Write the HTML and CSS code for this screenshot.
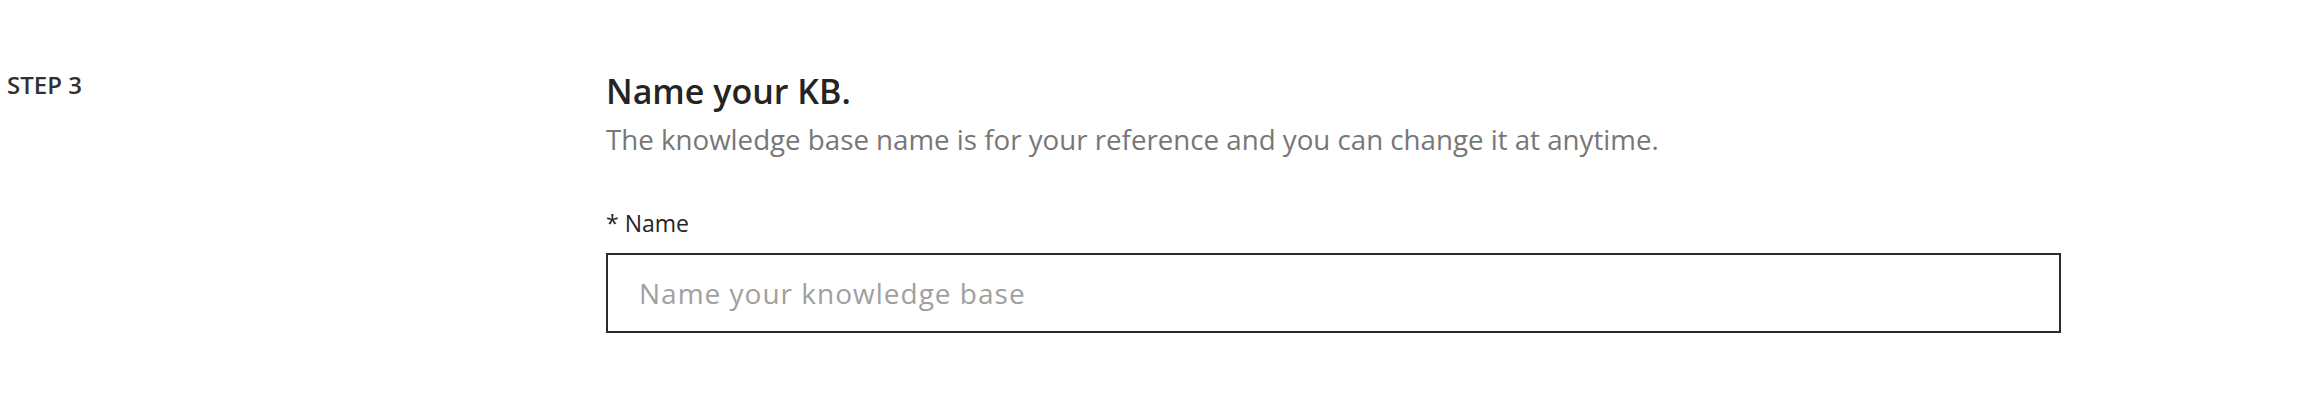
FILE: index.html
```html
<!DOCTYPE html>
<html lang="en">
<head>
<meta charset="utf-8">
<title>Name your KB</title>
<link rel="stylesheet" href="styles.css">
</head>
<body>
<section class="step">
  <div class="step-label">STEP 3</div>
  <div class="step-body">
    <h2 class="title">Name your KB.</h2>
    <p class="subtitle">The knowledge base name is for your reference and you can change it at anytime.</p>
    <label class="field-label" for="kbname">* Name</label>
    <input id="kbname" class="field-input" type="text" placeholder="Name your knowledge base">
  </div>
</section>
</body>
</html>
```

FILE: styles.css
```css
html, body {
  margin: 0;
  padding: 0;
  background: #ffffff;
}

body {
  font-family: "Open Sans", "Noto Sans", "Liberation Sans", sans-serif;
  color: #252423;
}

.step {
  display: flex;
  flex-direction: row;
  align-items: flex-start;
  padding-top: 69px;
  padding-left: 7px;
}

.step-label {
  width: 599px;
  flex: 0 0 599px;
  font-size: 24px;
  line-height: 32px;
  font-weight: 600;
  color: #323130;
}

.step-body {
  width: 1455px;
  display: flex;
  flex-direction: column;
}

.title {
  margin: 0;
  font-size: 34px;
  line-height: 44px;
  font-weight: 600;
  color: #252423;
}

.subtitle {
  margin: 8px 0 0 0;
  font-size: 27.7px;
  line-height: 36px;
  font-weight: 400;
  color: #777777;
}

.field-label {
  margin-top: 50px;
  font-size: 23px;
  line-height: 32px;
  color: #252423;
}

.field-input {
  box-sizing: border-box;
  margin-top: 14px;
  width: 1455px;
  height: 80px;
  border: 2px solid #2b2b2b;
  border-radius: 0;
  padding: 0 20px 0 31px;
  font-family: "Open Sans", "Noto Sans", "Liberation Sans", sans-serif;
  font-size: 28px;
  letter-spacing: 1px;
  color: #252423;
  background: #ffffff;
  outline: none;
}

.field-input::placeholder {
  color: #a0a0a0;
  opacity: 1;
}
```
